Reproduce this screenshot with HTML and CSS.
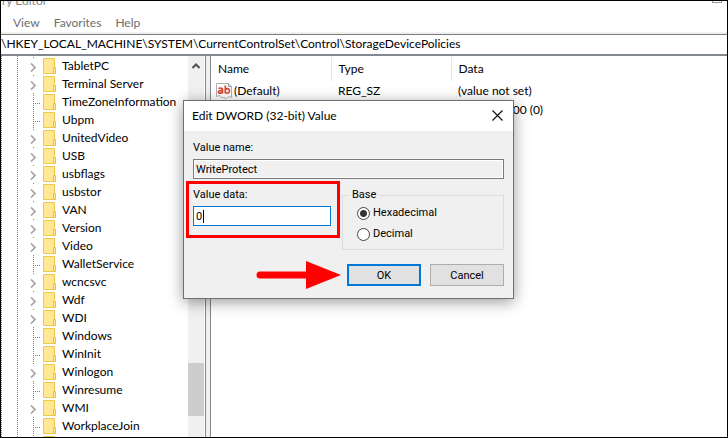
FILE: index.html
```
<!DOCTYPE html>
<html lang="en">
<head>
    <meta charset="UTF-8">
    <title>Registry Editor</title>
    <link rel="stylesheet" href="styles.css">
</head>
<body>
    <svg class="defs" width="0" height="0">
        <symbol id="folder" viewBox="0 0 13 16">
            <path d="M0.5 0.5h11v15h-11z" fill="#ffe793" stroke="#edc84b"/>
            <path d="M10.5 9.5h2v6h-2z" fill="#ffe793" stroke="#e8c344"/>
        </symbol>
        <symbol id="arrow" viewBox="0 0 6 9">
            <path d="M1 0.5l4 4-4 4" fill="none" stroke="#a6a6a6" stroke-width="1.7"/>
        </symbol>
        <symbol id="value" viewBox="0 0 16 16">
            <path d="M0.5 0.5h12l3 3v11l-3-1-2 2-3-1-2 0-2-2-3 1z" fill="#fff" stroke="#b0b0b0"/>
            <path d="M12.5 0.5v3h3" fill="none" stroke="#9a9a9a"/>
            <g fill="none" stroke="#d8472f" stroke-width="1.7">
                <path d="M2.5 5.6c1-.8 4-1 4 1v4M6.5 7.6c-2-.2-4 0-4 1.5s3 1.600 4-.5"/>
                <path d="M9.300 2.500v8M9.300 7c.8-2 4.200-1.800 4.200 1s-3.400 2.800-4.200 1"/>
            </g>
        </symbol>
    </svg>

    <div class="window">
        <div class="titlebar">
            <span class="caption">ry Editor</span>
            <span class="maximize"></span>
        </div>
        <div class="menu">
            <a href="#">View</a>
            <a href="#">Favorites</a>
            <a href="#">Help</a>
        </div>
        <div class="address">\HKEY_LOCAL_MACHINE\SYSTEM\CurrentControlSet\Control\StorageDevicePolicies</div>

        <div class="panes">
            <ul class="tree" id="tree"></ul>
            <div class="scrollbar">
                <svg class="up" width="8" height="6" viewBox="0 0 8 6"><path d="M0.500 5L4 1.500 7.500 5" fill="none" stroke="#505050" stroke-width="2"/></svg>
                <div class="thumb"></div>
            </div>
            <div class="splitter"></div>
            <div class="list">
                <table>
                    <thead>
                        <tr><th>Name</th><th>Type</th><th>Data</th></tr>
                    </thead>
                    <tbody>
                        <tr>
                            <td><svg class="icon"><use href="#value"/></svg>(Default)</td>
                            <td>REG_SZ</td>
                            <td>(value not set)</td>
                        </tr>
                        <tr>
                            <td></td>
                            <td></td>
                            <td>0x00000000 (0)</td>
                        </tr>
                    </tbody>
                </table>
            </div>
        </div>

        <form class="dialog" onsubmit="return false">
            <div class="dialog_title">
                <span>Edit DWORD (32-bit) Value</span>
                <button type="button" class="close" aria-label="Close">
                    <svg width="11" height="11" viewBox="0 0 11 11"><path d="M0.500 0.500l10 10M10.500 0.500l-10 10" stroke="#111" stroke-width="1.200"/></svg>
                </button>
            </div>
            <div class="dialog_body">
                <label for="name">Value name:</label>
                <input type="text" id="name" value="WriteProtect" readonly>
                <div class="columns">
                    <div class="data">
                        <label for="data">Value data:</label>
                        <div class="field">
                            <input type="text" id="data" value="0">
                            <span class="caret"></span>
                        </div>
                        <div class="mark"></div>
                    </div>
                    <fieldset>
                        <legend>Base</legend>
                        <label><input type="radio" name="base" checked>Hexadecimal</label>
                        <label><input type="radio" name="base">Decimal</label>
                    </fieldset>
                </div>
                <div class="buttons">
                    <svg class="pointer" width="86" height="28" viewBox="0 0 86 28">
                        <path d="M4 14h50" stroke="#f00" stroke-width="7" stroke-linecap="round"/>
                        <path d="M50 0l35 14-35 14z" fill="#f00"/>
                    </svg>
                    <button class="ok">OK</button>
                    <button type="button">Cancel</button>
                </div>
            </div>
        </form>
    </div>

    <script>
        // + means the key has subkeys
        var keys = ["+TabletPC", "+Terminal Server", "TimeZoneInformation", "Ubpm", "+UnitedVideo",
            "+USB", "+usbflags", "+usbstor", "+VAN", "+Version", "+Video", "WalletService",
            "+wcncsvc", "+Wdf", "+WDI", "Windows", "WinInit", "+Winlogon", "Winresume", "+WMI",
            "WorkplaceJoin", ""];
        var html = "";
        for (var i = 0; i < keys.length; i++) {
            var parent = keys[i][0] == "+";
            html += '<li><span class="' + (parent ? "node parent" : "node") + '">' +
                (parent ? '<svg width="6" height="9"><use href="#arrow"/></svg>' : "") +
                '</span><svg class="folder"><use href="#folder"/></svg>' +
                '<span class="key">' + keys[i].replace("+", "") + "</span></li>";
        }
        document.getElementById("tree").innerHTML = html;
    </script>
</body>
</html>
```

FILE: styles.css
```
* {box-sizing: border-box;}
body {
    margin: 0;
    font-family: Lato, sans-serif;
    font-size: 12px;
    color: #000;
}
.defs {position: absolute;}
.window {
    position: relative;
    display: flex;
    flex-direction: column;
    height: 100vh;
    border: 1px solid #000;
    background: #fff;
    overflow: hidden;
}

/* top bars */
.titlebar {
    display: flex;
    justify-content: space-between;
    align-items: flex-end;
    height: 12px;
    padding: 0 5px 0 1px;
    overflow: hidden;
    color: #888;
}
.caption {line-height: 16px; margin-bottom: 4px;}
.maximize {width: 10px; height: 10px; margin-bottom: 10px; border: 1px solid #999;}
.menu {
    display: flex;
    gap: 14px;
    height: 21px;
    padding-left: 12px;
    line-height: 20px;
    border-bottom: 2px solid #f0f0f0;
}
.menu a {color: #6d6d6d; text-decoration: none;}
.address {
    height: 22px;
    line-height: 18px;
    border-top: 1px solid #7a7a7a;
    border-bottom: 2px solid #828790;
    white-space: nowrap;
}

/* tree */
.panes {display: flex; flex: 1; min-height: 0;}
.tree {
    width: 187px;
    margin: 0;
    padding: 1px 0 0 16px;
    list-style: none;
    overflow: hidden;
    background:
        repeating-linear-gradient(#808080 0 1px, transparent 1px 2px) 0 0 / 1px 100% no-repeat,
        repeating-linear-gradient(#808080 0 1px, transparent 1px 2px) 16px 0 / 1px 100% no-repeat;
}
.tree li {display: flex; align-items: center; height: 18px; white-space: nowrap;}
.node {
    display: flex;
    align-items: center;
    width: 8px;
    height: 18px;
    margin: 0 2px 0 16px;
    background:
        repeating-linear-gradient(#808080 0 1px, transparent 1px 2px) 0 0 / 1px 18px no-repeat,
        repeating-linear-gradient(90deg, #808080 0 1px, transparent 1px 2px) 0 10px / 8px 1px no-repeat;
}
.parent {
    width: 11px;
    margin: 0 2px 0 13px;
    padding-top: 2px;
    background: linear-gradient(#808080, #808080) 3px 0 / 1px 1px no-repeat;
}
.folder {width: 13px; height: 16px; margin-right: 6px;}
.key {padding-bottom: 2px;}

.scrollbar {
    display: flex;
    flex-direction: column;
    align-items: center;
    width: 16px;
    background: #f0f0f0;
}
.up {margin-top: 7px;}
.thumb {width: 100%; height: 53px; margin-top: auto; margin-bottom: 21px; background: #cdcdcd;}
.splitter {
    width: 6px;
    margin-left: 1px;
    background: #f0f0f0;
    border-left: 1px solid #828790;
    border-right: 1px solid #828790;
}

/* values */
.list {flex: 1; overflow: hidden;}
table {width: 100%; table-layout: fixed; border-collapse: collapse; margin-top: 1px;}
th, td {padding: 0 0 0 7px; font-weight: normal; text-align: left; white-space: nowrap;}
th {height: 24px; padding-bottom: 2px; border-right: 1px solid #e5e5e5;}
th:nth-child(1), th:nth-child(2) {width: 120px;}
th:last-child {border-right: 0;}
td {height: 19px;}
td:first-child {padding-left: 5px;}
.icon {width: 16px; height: 16px; margin-right: 2px; vertical-align: -4px;}

/* dialog */
.dialog {
    position: absolute;
    left: 182px;
    top: 99px;
    width: 331px;
    border: 1px solid #707070;
    background: #f0f0f0;
    box-shadow: 0 3px 14px rgba(0, 0, 0, 0.4);
    font-family: Roboto, sans-serif;
    font-size: 11px;
}
.dialog_title {
    display: flex;
    align-items: center;
    justify-content: space-between;
    height: 30px;
    padding: 0 10px 2px 8px;
    background: #fff;
    font-family: Lato, sans-serif;
    font-size: 12px;
}
.close {display: flex; padding: 0; border: 0; background: none;}
.dialog_body {padding: 9px 9px 12px;}
.dialog_body label {display: block; line-height: 16px;}
input[type=text] {
    display: block;
    width: 100%;
    height: 20px;
    padding: 0 2px;
    border: 1px solid #7a7a7a;
    outline: 0;
    background: #fff;
    font: inherit;
}
#name {margin-top: 3px; background: #f0f0f0; box-shadow: inset 0 0 0 1px #fff;}
.columns {display: flex; gap: 11px; margin-top: 8px;}
.data {position: relative; width: 138px;}
.field {position: relative; margin-top: 3px;}
#data {border-color: #0078d7;}
.caret {position: absolute; left: 10px; top: 4px; width: 1px; height: 13px; background: #000;}
.mark {
    position: absolute;
    left: -7px;
    right: -9px;
    top: -6px;
    height: 57px;
    border: 3px solid #f00;
}
fieldset {
    flex: 1;
    min-width: 0;
    height: 63px;
    margin: 0;
    padding: 2px 14px 0;
    border: 1px solid #dcdcdc;
}
legend {margin-left: -8px; padding: 0 3px; line-height: 16px;}
.dialog_body fieldset label {display: flex; align-items: center; gap: 3px; margin-bottom: 5px;}
input[type=radio] {
    appearance: none;
    width: 13px;
    height: 13px;
    margin: 0;
    border: 1px solid #444;
    border-radius: 50%;
    background: #fff;
}
input[type=radio]:checked {background: radial-gradient(circle, #333 0 3px, #fff 4px);}
.buttons {display: flex; justify-content: flex-end; align-items: center; gap: 9px; margin-top: 14px;}
.buttons button {
    width: 74px;
    height: 22px;
    padding: 0;
    border: 1px solid #adadad;
    background: #e1e1e1;
    font: inherit;
}
.buttons .ok {border: 2px solid #0078d7;}
.pointer {margin: -3px -4px -3px 0;}
```
